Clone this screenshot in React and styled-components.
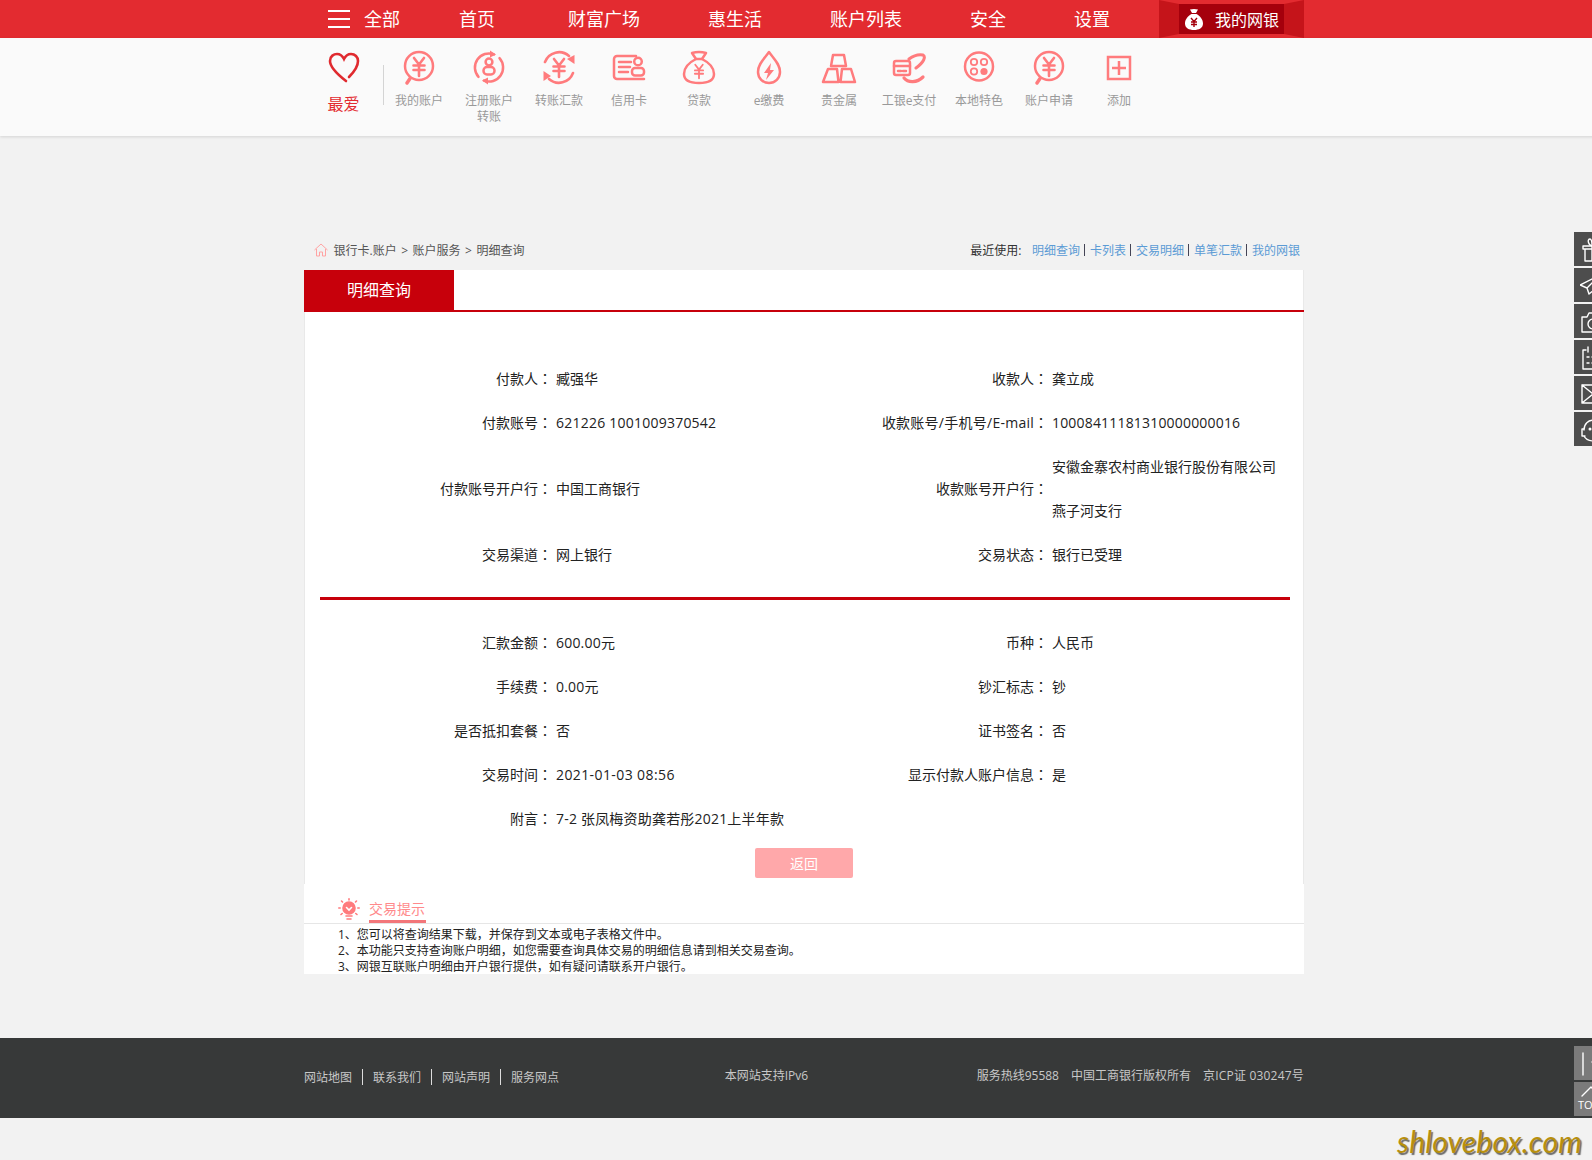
import React from 'react';
import styled, { createGlobalStyle } from 'styled-components';

const Global = createGlobalStyle`
  html, body { margin: 0; padding: 0; height: 100%; overflow: hidden; background: #f2f2f2; }
  body { font-family: "Open Sans", "Noto Sans CJK SC", sans-serif; color: #222; }
  * { box-sizing: border-box; }
`;

const Page = styled.div`
  position: relative;
  width: 1608px;
  height: 1160px;
  overflow: hidden;
`;

const TopBar = styled.header`
  height: 38px;
  background: #e32b30;
`;
const TopInner = styled.nav`
  width: 1000px;
  height: 38px;
  margin: 0 auto;
  padding-left: 24px;
  display: flex;
  align-items: center;
`;
const Burger = styled.div`
  width: 22px;
  height: 18px;
  margin-right: 14px;
  border-top: 2px solid #fff;
  border-bottom: 2px solid #fff;
  position: relative;
  &::after {
    content: "";
    position: absolute;
    left: 0;
    right: 0;
    top: 6px;
    height: 2px;
    background: #fff;
  }
`;
const NavItem = styled.a`
  font-size: 18px;
  line-height: 38px;
  color: #fff;
  white-space: nowrap;
  margin-right: ${p => p.$gap}px;
`;
const Ribbon = styled.div`
  width: 145px;
  height: 38px;
  margin-left: auto;
  padding: 4px 20px;
  background: #c5141a;
  clip-path: polygon(0 0, 20px 4px, calc(100% - 20px) 4px, 100% 0, 100% 100%, calc(100% - 20px) 34px, 20px 34px, 0 100%);
`;
const RibbonInner = styled.div`
  height: 30px;
  background: #a5000c;
  display: flex;
  align-items: center;
  padding-left: 6px;
  gap: 12px;
  color: #fff;
  font-size: 16px;
  white-space: nowrap;
`;

const SubBar = styled.div`
  height: 98px;
  background: #fafafa;
  box-shadow: 0 1px 3px rgba(0, 0, 0, 0.13);
`;
const SubInner = styled.div`
  width: 1000px;
  margin: 0 auto;
  display: flex;
  align-items: flex-start;
`;
const Favorite = styled.div`
  width: 79px;
  padding-top: 12px;
  display: flex;
  flex-direction: column;
  align-items: center;
  color: #e32b30;
  font-size: 16px;
  line-height: 22px;
`;
const Divider = styled.div`
  width: 1px;
  height: 40px;
  margin-top: 27px;
  background: #d4d4d4;
`;
const Tool = styled.div`
  width: 70px;
  padding: 11px 6px 0;
  display: flex;
  flex-direction: column;
  align-items: center;
  text-align: center;
  font-size: 12px;
  line-height: 16px;
  color: #999;
`;
const ToolLabel = styled.span`
  margin-top: 8px;
`;
const Icon = styled.svg`
  display: block;
  flex: none;
  fill: none;
  stroke: #ff7b7d;
  stroke-width: 2.5;
  stroke-linecap: round;
  stroke-linejoin: round;
`;

const Main = styled.main`
  width: 1000px;
  margin: 100px auto 0;
`;
const Crumbs = styled.div`
  height: 28px;
  margin-bottom: 6px;
  padding: 0 4px 0 10px;
  display: flex;
  align-items: center;
  justify-content: space-between;
  font-size: 12px;
  color: #555;
`;
const CrumbPath = styled.div`
  display: flex;
  align-items: center;
  gap: 4.5px;
`;
const HomeIcon = styled.svg`
  margin-right: 1px;
  fill: none;
  stroke: #ffa3a3;
  stroke-width: 1;
`;
const Recent = styled.div`
  display: flex;
  align-items: center;
  gap: 4.5px;
  color: #333;
`;
const RecentLabel = styled.span`
  margin-right: 6px;
`;
const RecentLink = styled.a`
  color: #5b9bd5;
`;
const Bar = styled.span`
  width: 1px;
  height: 12px;
  background: #445;
`;

const Panel = styled.section`
  background: #fff;
  border-left: 1px solid #e9e9e9;
  border-right: 1px solid #e9e9e9;
  height: 614px;
`;
const TabRow = styled.div`
  height: 42px;
  margin: 0 -1px;
  border-bottom: 2px solid #c7000b;
`;
const Tab = styled.div`
  width: 150px;
  height: 42px;
  background: #c7000b;
  color: #fff;
  font-size: 16px;
  line-height: 40px;
  text-align: center;
`;
const Body = styled.div`
  padding: 45px 13px 0 15px;
`;
const Grid = styled.div`
  display: grid;
  grid-template-columns: 232px 264px 232px 242px;
  grid-auto-rows: auto;
  align-items: center;
  font-size: 14px;
  color: #222;
`;
const Label = styled.div`
  height: 44px;
  line-height: 44px;
  text-align: right;
  white-space: nowrap;
  letter-spacing: ${p => p.$track || 0}px;
`;
const Colon = styled.span`
  font-family: "Noto Sans CJK TC", sans-serif;
  letter-spacing: 0;
  line-height: 0;
`;
const Value = styled.div`
  padding-left: 4px;
  white-space: nowrap;
  letter-spacing: ${p => p.$track || 0}px;
  grid-column: ${p => (p.$wide ? 'span 3' : 'auto')};
`;
const ValueLine = styled.div`
  height: 44px;
  line-height: 44px;
`;
const Rule = styled.div`
  height: 3px;
  margin: 20px 0 21px;
  background: #c7000b;
`;
const ButtonRow = styled.div`
  margin-top: 7px;
  padding-right: 2px;
  display: flex;
  justify-content: center;
`;
const BackButton = styled.button`
  width: 98px;
  height: 30px;
  border: 0;
  border-radius: 2px;
  background: #ffa8aa;
  color: #fff;
  font: inherit;
  font-size: 14px;
`;

const Tips = styled.section`
  height: 90px;
  background: #fff;
`;
const TipHead = styled.div`
  height: 40px;
  padding-left: 34px;
  display: flex;
  align-items: flex-end;
  gap: 9px;
  border-bottom: 1px solid #e6e6e6;
`;
const TipBulb = styled.svg`
  margin-bottom: 1px;
  fill: none;
  stroke: #ff7b7d;
  stroke-width: 1.6;
  stroke-linecap: round;
`;
const TipTitle = styled.span`
  width: 57px;
  height: 39px;
  padding-top: 14px;
  font-size: 14px;
  line-height: 22px;
  color: #ff8a8c;
  border-bottom: 3px solid #f2767a;
  white-space: nowrap;
`;
const TipList = styled.div`
  padding: 3px 0 0 34px;
  font-size: 12px;
  line-height: 16px;
  color: #222;
`;

const Footer = styled.footer`
  height: 80px;
  margin-top: 64px;
  background: #373939;
`;
const FootInner = styled.div`
  width: 1000px;
  height: 80px;
  margin: 0 auto;
  display: flex;
  align-items: center;
  justify-content: space-between;
  font-size: 12px;
  color: #c8c8c8;
`;
const FootLinks = styled.div`
  display: flex;
  align-items: center;
  gap: 10px;
  padding-bottom: 2px;
`;
const FootSep = styled.span`
  width: 1px;
  height: 16px;
  background: #ddd;
`;
const FootText = styled.div`
  display: flex;
  gap: 12px;
  padding-bottom: 6px;
`;
const FootMid = styled(FootText)`
  margin-right: 3px;
`;
const FootWide = styled.span`
  letter-spacing: 0.2px;
`;

const SideRail = styled.div`
  position: absolute;
  left: 1574px;
  top: ${p => p.$top}px;
  display: flex;
  flex-direction: column;
  gap: 2px;
`;
const SideBtn = styled.div`
  width: 18px;
  height: 34px;
  background: ${p => p.$bg};
  display: flex;
  align-items: center;
  padding-left: 6px;
  color: #fff;
  overflow: hidden;
`;
const SideIcon = styled.svg`
  display: block;
  flex: none;
  fill: none;
  stroke: #fff;
  stroke-width: 1.4;
  stroke-linejoin: round;
  stroke-linecap: round;
`;
const TopBtn = styled(SideBtn)`
  flex-direction: column;
  align-items: flex-start;
  padding: 4px 0 0 4px;
  font-size: 11px;
  line-height: 14px;
  letter-spacing: 0;
`;
const Watermark = styled.div`
  position: absolute;
  left: 1397px;
  top: 1125px;
  font-family: "Lato", sans-serif;
  font-style: italic;
  font-weight: 400;
  font-size: 30px;
  line-height: 32px;
  letter-spacing: 0.2px;
  color: #b88f0e;
  text-shadow: 1.5px 1.5px 1px #6a6a6a;
  white-space: nowrap;
`;

const Yen = ({ s = 2.6 }) => (
  <path strokeWidth={s} d="M13 9 L18 15.5 L23 9 M12.5 16.5 H23.5 M12.5 21 H23.5 M18 15.5 V27" />
);

const IconBox = ({ children }) => (
  <Icon width="36" height="36" viewBox="0 0 36 36">{children}</Icon>
);

const Search = () => (
  <IconBox>
    <circle cx="18" cy="17" r="14" />
    <Yen />
    <path strokeWidth="3.4" d="M9 29.5 L6 34" />
  </IconBox>
);
const Register = () => (
  <IconBox>
    <path d="M7.5 27.8 A14 14 0 0 1 23 5.4 M28.5 9.2 A14 14 0 0 1 13 31.6" />
    <path fill="#ff7b7d" stroke="none" d="M19 1.5 L25 5.5 L19 8.5 Z M17 28.5 L11 31.5 L17 35.5 Z" />
    <circle cx="18" cy="13" r="3.4" />
    <rect x="12.5" y="18" width="11" height="7.5" rx="3.5" />
  </IconBox>
);
const Transfer = () => (
  <IconBox>
    <path strokeWidth="2.6" d="M4 13 A15 15 0 0 1 28 7 M32 24 A15 15 0 0 1 8 30" />
    <path fill="#ff7b7d" stroke="none" d="M33.5 6 L33.5 15 L26 10 Z M2.5 22 L10 27 L2.5 32 Z" />
    <g transform="translate(0 1)"><Yen /></g>
  </IconBox>
);
const Card = () => (
  <IconBox>
    <path d="M25 7 H6 a3 3 0 0 0 -3 3 V27 a3 3 0 0 0 3 3 H33" />
    <path d="M8 13 H20 M8 18 H19 M8 23 H17" />
    <circle cx="27" cy="12.5" r="3.8" />
    <rect x="21" y="19" width="12" height="7.5" rx="3" />
  </IconBox>
);
const Bag = () => (
  <IconBox>
    <path d="M11 4 Q18 2 25 4 L21 10 H15 Z" />
    <path d="M15 10 C7 14 3 20 3 25 C3 31 9 34 18 34 C27 34 33 31 33 25 C33 20 29 14 21 10" />
    <g transform="translate(4.5 9) scale(.75)"><Yen s={2.4} /></g>
  </IconBox>
);
const Drop = () => (
  <IconBox>
    <path d="M18 3 C13 10 7 15 7 23 A11 11 0 0 0 29 23 C29 15 23 10 18 3 Z" />
    <path fill="#ff7b7d" stroke="none" d="M20 14 L13 24 H17 L15 31 L23 21 H19 Z" />
  </IconBox>
);
const Gold = () => (
  <IconBox>
    <path d="M12 6 H23 L25 17 H10 Z M7 20 H16 L17.5 33 H2 Z M21 20 H30 L34 33 H19.5 Z" />
  </IconBox>
);
const EPay = () => (
  <IconBox>
    <rect x="3" y="12" width="16" height="14" rx="2" />
    <path d="M3 17 H19 M7 22 H10 M12 22 H15" />
    <path strokeWidth="3" d="M18 10 C22 7 27 5 32 6 C35 8 33 13 25 19" />
    <path strokeWidth="3.2" d="M13 29 C17 34 26 34 32 28" />
  </IconBox>
);
const Local = () => (
  <IconBox>
    <circle cx="18" cy="17.5" r="14" />
    <circle cx="13" cy="13" r="3.2" strokeWidth="1.8" />
    <circle cx="23" cy="13" r="3.2" strokeWidth="1.8" />
    <circle cx="13" cy="22.5" r="3.2" strokeWidth="1.8" />
    <circle cx="23" cy="22.5" r="3.6" fill="#ff7b7d" stroke="none" />
  </IconBox>
);
const Add = () => (
  <IconBox>
    <rect x="7" y="8" width="22" height="22" strokeLinejoin="miter" />
    <path strokeLinecap="butt" d="M18 12 V26 M11 19 H25" />
  </IconBox>
);

const tools = [
  ['我的账户', Search],
  ['注册账户转账', Register],
  ['转账汇款', Transfer],
  ['信用卡', Card],
  ['贷款', Bag],
  ['e缴费', Drop],
  ['贵金属', Gold],
  ['工银e支付', EPay],
  ['本地特色', Local],
  ['账户申请', Search],
  ['添加', Add],
];

const navs = [
  ['全部', 59],
  ['首页', 73],
  ['财富广场', 68],
  ['惠生活', 68],
  ['账户列表', 68],
  ['安全', 68],
  ['设置', 0],
];

const topRows = [
  { l: '付款人', v: ['臧强华'], l2: '收款人', v2: ['龚立成'] },
  { l: '付款账号', v: ['621226 1001009370542'], t: 0.23, l2: '收款账号/手机号/E-mail', lt2: 0.25, v2: ['10008411181310000000016'], t2: 0.18 },
  { l: '付款账号开户行', v: ['中国工商银行'], l2: '收款账号开户行', v2: ['安徽金寨农村商业银行股份有限公司', '燕子河支行'] },
  { l: '交易渠道', v: ['网上银行'], l2: '交易状态', v2: ['银行已受理'] },
];
const lowRows = [
  { l: '汇款金额', v: ['600.00元'], t: 0.2, l2: '币种', v2: ['人民币'] },
  { l: '手续费', v: ['0.00元'], t: 0.2, l2: '钞汇标志', v2: ['钞'] },
  { l: '是否抵扣套餐', v: ['否'], l2: '证书签名', v2: ['否'] },
  { l: '交易时间', v: ['2021-01-03 08:56'], t: 0.4, l2: '显示付款人账户信息', v2: ['是'] },
];

const Pair = ({ label, lines, track, labelTrack }) => (
  <>
    <Label $track={labelTrack}>{label}<Colon>：</Colon></Label>
    <Value $track={track}>{lines.map(l => <ValueLine key={l}>{l}</ValueLine>)}</Value>
  </>
);

const Rows = ({ rows }) => (
  <Grid>
    {rows.map(r => (
      <React.Fragment key={r.l}>
        <Pair label={r.l} lines={r.v} track={r.t} />
        <Pair label={r.l2} lines={r.v2} track={r.t2} labelTrack={r.lt2} />
      </React.Fragment>
    ))}
  </Grid>
);

const sideIcons = [
  <><path d="M3 10 H21 V13 H3 Z M5 13 V25 H19 V13 M12 10 V25" /><path d="M12 10 C8 9 7 3 10 3 C12 3 12 7 12 10 C12 7 12 3 14 3 C17 3 16 9 12 10" /></>,
  <path d="M0 13 L14 6 M0 13 L7 16 L14 9 M7 16 L9 22 L14 18" />,
  <><path d="M2 9 H7 L9 5 H17 L19 9 H24 V24 H2 Z" /><circle cx="13" cy="16" r="5" /></>,
  <path d="M6 6 H3 V25 H21 V6 H18 M8 3 V8 M16 3 V8 M7 13 H9 M12 13 H18 M7 19 H9 M12 19 H18" />,
  <path d="M2 5 H24 V23 H2 Z M2 5 L13 14 L24 5 M2 23 L13 14 L24 23" />,
  <><path d="M4 14 C4 1 22 1 22 14 V20 M4 13 H2 V20 H5 M4 20 C6 24 10 25 14 25" /><circle cx="10" cy="13" r="0.8" /></>,
];

export default function App() {
  return (
    <Page>
      <Global />
      <TopBar>
        <TopInner>
          <Burger />
          {navs.map(([t, g]) => <NavItem key={t} $gap={g}>{t}</NavItem>)}
          <Ribbon>
            <RibbonInner>
              <svg width="18" height="21" viewBox="0 0 18 21">
                <path fill="#fff" d="M5 0.5 Q9 -0.5 13 0.5 L11 4 H7 Z M6.5 5 H11.5 C15 7 18 10.5 18 14.5 C18 19 14 21 9 21 C4 21 0 19 0 14.5 C0 10.5 3 7 6.5 5 Z" />
                <path fill="none" stroke="#a5000c" strokeWidth="1.4" d="M6 9 L9 12.5 L12 9 M6 13 H12 M6 15.5 H12 M9 12.5 V18" />
              </svg>
              我的网银
            </RibbonInner>
          </Ribbon>
        </TopInner>
      </TopBar>

      <SubBar>
        <SubInner>
          <Favorite>
            <svg width="36" height="36" viewBox="0 0 36 36" style={{ marginBottom: 7 }}>
              <path fill="none" stroke="#e02a2f" strokeWidth="2.6" strokeLinecap="round" d="M20 31 C11 24 4 17 4 11 C4 6 8 4 11 4 C14 4 16.5 6 18 9 C19.5 6 22 4 25 4 C29 4 32 7 32 11 C32 16 28 22 23 27" />
            </svg>
            最爱
          </Favorite>
          <Divider />
          {tools.map(([t, C]) => (
            <Tool key={t}>
              <C />
              <ToolLabel>{t}</ToolLabel>
            </Tool>
          ))}
        </SubInner>
      </SubBar>

      <Main>
        <Crumbs>
          <CrumbPath>
            <HomeIcon width="14" height="14" viewBox="0 0 14 14">
              <path d="M0.5 7 L7 1 L13.5 7 M2.5 6 V13 H5.5 V9 H8.5 V13 H11.5 V6" />
            </HomeIcon>
            <span>银行卡.账户</span>
            <span>&gt;</span>
            <span>账户服务</span>
            <span>&gt;</span>
            <span>明细查询</span>
          </CrumbPath>
          <Recent>
            <RecentLabel>最近使用:</RecentLabel>
            <RecentLink>明细查询</RecentLink><Bar />
            <RecentLink>卡列表</RecentLink><Bar />
            <RecentLink>交易明细</RecentLink><Bar />
            <RecentLink>单笔汇款</RecentLink><Bar />
            <RecentLink>我的网银</RecentLink>
          </Recent>
        </Crumbs>

        <Panel>
          <TabRow><Tab>明细查询</Tab></TabRow>
          <Body>
            <Rows rows={topRows} />
            <Rule />
            <Rows rows={lowRows} />
            <Grid>
              <Label>附言<Colon>：</Colon></Label>
              <Value $wide $track={0.2}><ValueLine>7-2 张凤梅资助龚若彤2021上半年款</ValueLine></Value>
            </Grid>
            <ButtonRow><BackButton>返回</BackButton></ButtonRow>
          </Body>
        </Panel>

        <Tips>
          <TipHead>
            <TipBulb width="22" height="24" viewBox="0 0 22 24">
              <circle cx="11" cy="10" r="6" fill="#ff7b7d" />
              <path stroke="#fff" d="M8.5 9.5 L11 12 L13.5 9.5" />
              <path d="M8 18 H14 M9 21 H13 M11 0.8 V2 M3.5 3 L4.5 4 M18.5 3 L17.5 4 M0.8 10 H2.2 M19.8 10 H21.2 M3 16.5 L4.2 15.5 M19 16.5 L17.8 15.5" />
            </TipBulb>
            <TipTitle>交易提示</TipTitle>
          </TipHead>
          <TipList>
            <div>1、您可以将查询结果下载，并保存到文本或电子表格文件中。</div>
            <div>2、本功能只支持查询账户明细，如您需要查询具体交易的明细信息请到相关交易查询。</div>
            <div>3、网银互联账户明细由开户银行提供，如有疑问请联系开户银行。</div>
          </TipList>
        </Tips>
      </Main>

      <Footer>
        <FootInner>
          <FootLinks>
            <span>网站地图</span><FootSep />
            <span>联系我们</span><FootSep />
            <span>网站声明</span><FootSep />
            <span>服务网点</span>
          </FootLinks>
          <FootMid>本网站支持IPv6</FootMid>
          <FootText>
            <span>服务热线95588</span>
            <span>中国工商银行版权所有</span>
            <FootWide>京ICP证 030247号</FootWide>
          </FootText>
        </FootInner>
      </Footer>

      <SideRail $top={232}>
        {sideIcons.map((ic, i) => (
          <SideBtn key={i} $bg="#4d4d4d">
            <SideIcon width="26" height="26" viewBox="0 0 26 26">{ic}</SideIcon>
          </SideBtn>
        ))}
      </SideRail>
      <SideRail $top={1046}>
        <SideBtn $bg="#7b7b7b">
          <SideIcon width="26" height="26" viewBox="0 0 26 26"><path d="M3 3 V25 M12 12 H14" /></SideIcon>
        </SideBtn>
        <TopBtn $bg="#7b7b7b">
          <SideIcon width="26" height="12" viewBox="0 0 26 12"><path d="M4 10 L13 1 L22 10" /></SideIcon>
          TO
        </TopBtn>
      </SideRail>

      <Watermark>shlovebox.com</Watermark>
    </Page>
  );
}
